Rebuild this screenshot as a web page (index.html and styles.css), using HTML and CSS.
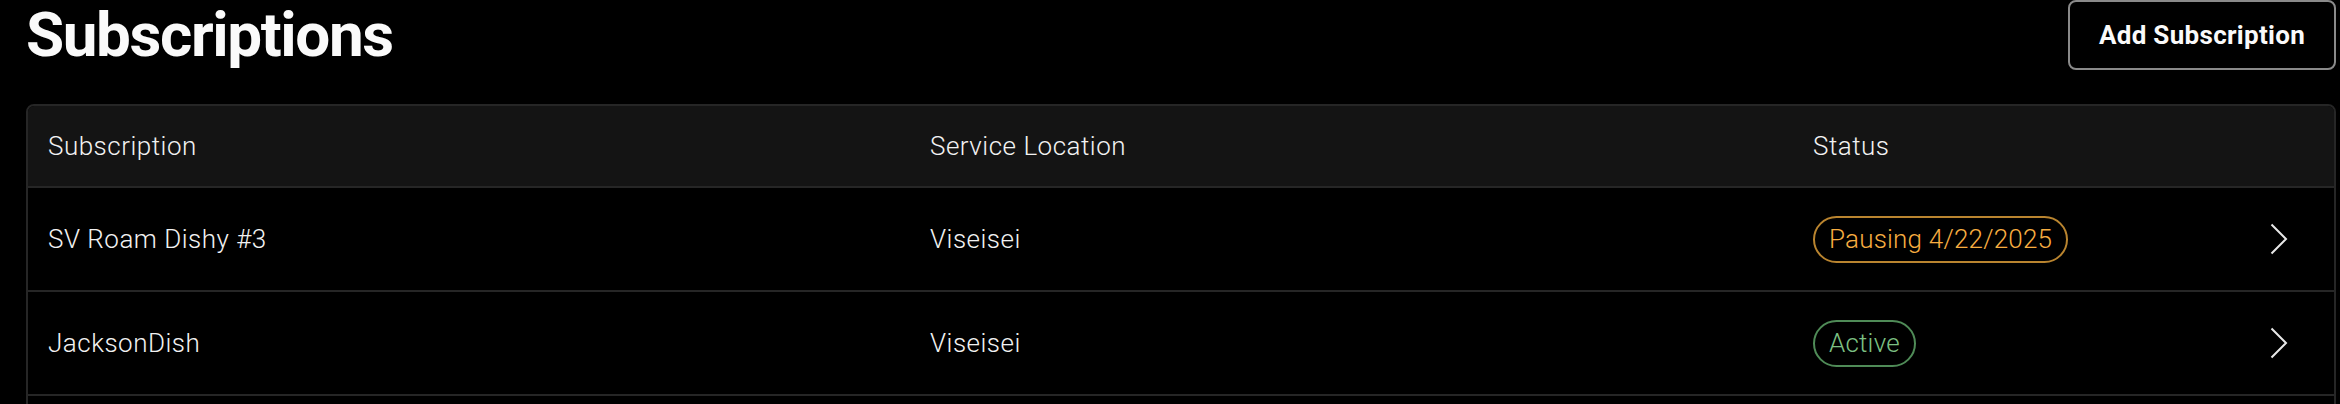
FILE: index.html
```html
<!DOCTYPE html>
<html lang="en">
<head>
<meta charset="utf-8">
<title>Subscriptions</title>
<link rel="stylesheet" href="styles.css">
</head>
<body>
<div class="page">
  <header class="page-header">
    <h1 class="title">Subscriptions</h1>
    <button class="btn-outline" type="button">Add Subscription</button>
  </header>
  <div class="table">
    <div class="row head">
      <div class="cell">Subscription</div>
      <div class="cell">Service Location</div>
      <div class="cell">Status</div>
      <div class="cell chev-cell"></div>
    </div>
    <div class="row">
      <div class="cell">SV Roam Dishy #3</div>
      <div class="cell">Viseisei</div>
      <div class="cell"><span class="badge badge-warn">Pausing 4/22/2025</span></div>
      <div class="cell chev-cell">
        <svg class="chev" width="18" height="32" viewBox="0 0 18 32"><path d="M1.5 1.5 L16 16 L1.5 30.5" fill="none" stroke="#e8e8e8" stroke-width="2"/></svg>
      </div>
    </div>
    <div class="row">
      <div class="cell">JacksonDish</div>
      <div class="cell">Viseisei</div>
      <div class="cell"><span class="badge badge-ok">Active</span></div>
      <div class="cell chev-cell">
        <svg class="chev" width="18" height="32" viewBox="0 0 18 32"><path d="M1.5 1.5 L16 16 L1.5 30.5" fill="none" stroke="#e8e8e8" stroke-width="2"/></svg>
      </div>
    </div>
    <div class="row filler"></div>
  </div>
</div>
</body>
</html>
```

FILE: styles.css
```css
* { box-sizing: border-box; }
html, body {
  margin: 0;
  background: #000;
}
body {
  font-family: Roboto, "Liberation Sans", sans-serif;
  color: #f2f2f2;
  overflow: hidden;
}
.page {
  padding: 0 4px 0 26px;
}
.page-header {
  display: flex;
  justify-content: space-between;
  align-items: flex-start;
  height: 70px;
}
.title {
  margin: 0;
  font-size: 62px;
  line-height: 70px;
  font-weight: 700;
  letter-spacing: -1.4px;
  color: #fafafa;
}
.btn-outline {
  height: 70px;
  width: 268px;
  background: #000;
  color: #fafafa;
  border: 2px solid #8a8a8a;
  border-radius: 8px;
  font-family: Roboto, "Liberation Sans", sans-serif;
  font-size: 26px;
  font-weight: 700;
  letter-spacing: 0.3px;
  padding: 0;
}
.table {
  margin-top: 34px;
  border: 2px solid #262626;
  border-radius: 8px;
  overflow: hidden;
}
.row {
  display: grid;
  grid-template-columns: 882px 883px 1fr 120px;
  align-items: center;
  height: 104px;
  border-top: 2px solid #262626;
  font-size: 26px;
  font-weight: 300;
  letter-spacing: 0.5px;
}
.row.head {
  border-top: none;
  height: 80px;
  background: #141414;
}
.row.filler {
  height: 104px;
}
.cell {
  padding-left: 20px;
  white-space: nowrap;
}
.chev-cell {
  display: flex;
  justify-content: flex-end;
  padding-right: 46px;
}
.chev { display: block; }
.badge {
  display: inline-flex;
  align-items: center;
  height: 47px;
  padding: 0 14px;
  border: 2px solid;
  border-radius: 24px;
  font-size: 26px;
  font-weight: 300;
  letter-spacing: 0.2px;
}
.badge-warn {
  color: #f7ad40;
  border-color: #b9842f;
}
.badge-ok {
  color: #7cc083;
  border-color: #4f8b57;
}
```
